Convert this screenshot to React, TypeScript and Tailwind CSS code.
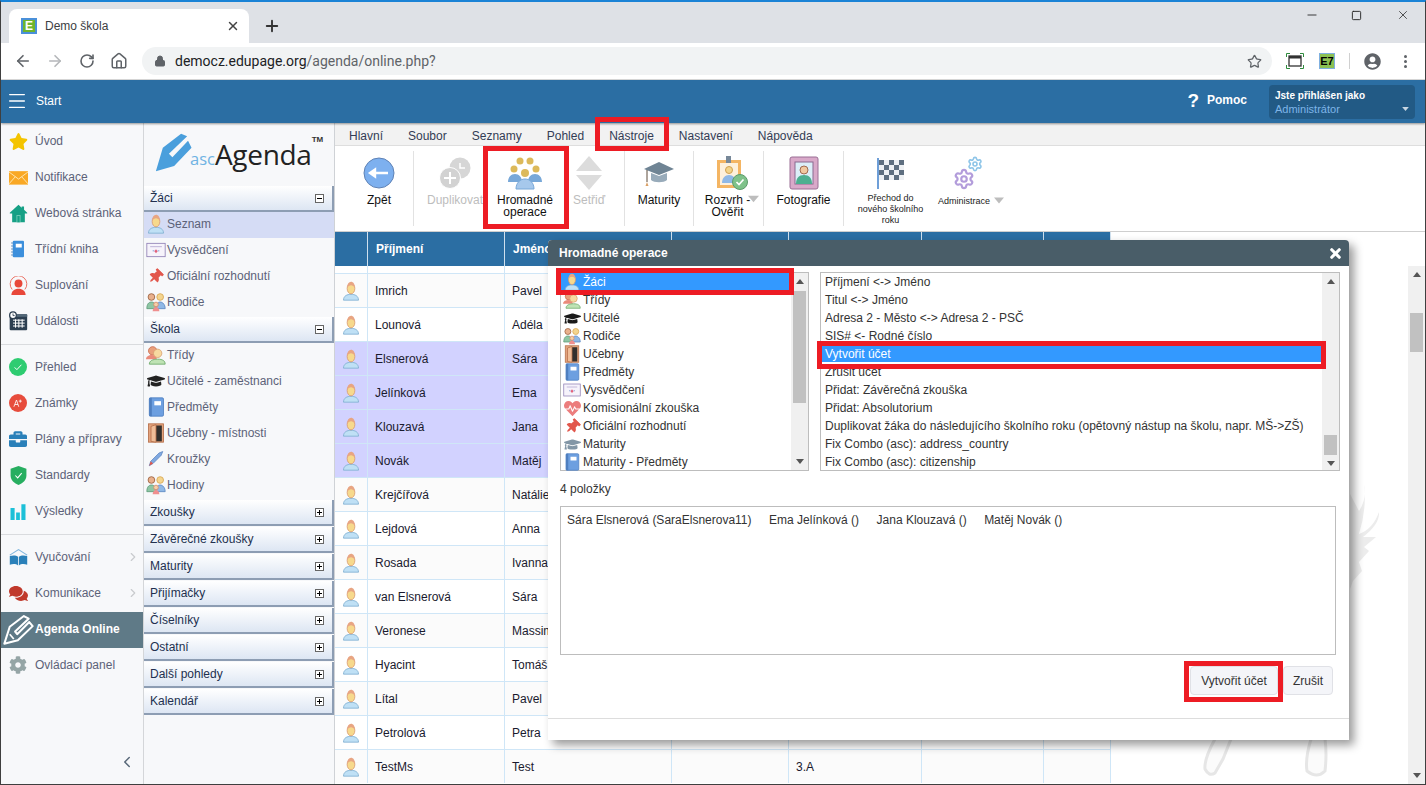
import { ArrowLeft, ArrowRight, ChevronLeft, House, Lock, Menu, Minus, Plus, RotateCw, Settings, Square, Star, X } from "lucide-react";
import { FaBriefcase, FaCog, FaComments, FaGraduationCap, FaHeartbeat, FaStar, FaThumbtack, FaUserCircle } from "react-icons/fa";
import type { ReactNode } from "react";

type IconProps = { className?: string };

const StudentIcon = ({ className = "w-[20px] h-[20px]" }: IconProps) => (
  <svg viewBox="0 0 24 24" className={className}>
    <path d="M3 23c0-5 4-7 9-7s9 2 9 7z" fill="#bfe0f5" stroke="#7eaed0" />
    <ellipse cx="12" cy="9" rx="4.6" ry="6.4" fill="#f7d98c" stroke="#d99a70" />
    <path d="M7.4 8c0-4.500 2-7 4.600-7s4.600 2.500 4.600 7c-1-2-3-3-4.600-3s-3.600 1-4.600 3z" fill="#e8a583" />
  </svg>
);

const ClassIcon = ({ className = "w-[20px] h-[20px]" }: IconProps) => (
  <svg viewBox="0 0 24 24" className={className}>
    <circle cx="8" cy="7" r="5" fill="#e9a07c" stroke="#c9694c" />
    <path d="M0 17c0-3 3-5 7-5s6 2 6 5z" fill="#ea8a7a" />
    <circle cx="14" cy="10" r="5" fill="#f7d9a0" stroke="#d8a070" />
    <path d="M4 23c0-4 4-6 10-6s9 2 9 6z" fill="#bfe3b4" stroke="#6aa766" />
  </svg>
);

const ParentsIcon = ({ className = "w-[20px] h-[20px]" }: IconProps) => (
  <svg viewBox="0 0 24 24" className={className}>
    <circle cx="6.500" cy="6" r="4" fill="#e9b08c" stroke="#9a5f3c" />
    <path d="M1 20c0-5 2-8 5.500-8s5.500 3 5.500 8z" fill="#8ec6a4" stroke="#5d9a78" />
    <circle cx="17" cy="6" r="4" fill="#f4d58f" stroke="#d9a64f" />
    <path d="M12 20c0-5 2-8 5-8s6 3 6 8z" fill="#8fb8e6" stroke="#5d88c0" />
    <circle cx="12" cy="15" r="2.800" fill="#f5cfa8" stroke="#d58a6a" />
    <path d="M8 23c0-3 2-5 4-5s4 2 4 5z" fill="#ef8f8f" />
  </svg>
);

const BookIcon = ({ className = "w-[20px] h-[20px]" }: IconProps) => (
  <svg viewBox="0 0 24 24" className={className}>
    <rect x="4" y="1" width="17" height="22" rx="1.500" fill="#6d9fe0" stroke="#4f7fc0" />
    <rect x="4" y="1" width="3" height="22" fill="#4f7fc0" />
    <rect x="10" y="5" width="8" height="5" fill="#ffffff" />
  </svg>
);

const DoorIcon = ({ className = "w-[20px] h-[20px]" }: IconProps) => (
  <svg viewBox="0 0 24 24" className={className}>
    <rect x="3" y="1" width="18" height="22" fill="#e3a37d" stroke="#b56e48" />
    <rect x="12" y="3" width="7" height="19" fill="#33302e" />
    <path d="M12 2l-6 2v18l6 1z" fill="#f0bd98" stroke="#b56e48" />
  </svg>
);

const CertificateIcon = ({ className = "w-[20px] h-[20px]" }: IconProps) => (
  <svg viewBox="0 0 24 24" className={className}>
    <rect x="1" y="4" width="22" height="16" fill="#f6f3fb" stroke="#8f7fb5" />
    <path d="M5 8h14" stroke="#b3a5d0" />
    <path d="M12 11l2 2.500-2 2.500-2-2.500z" fill="#e2607a" />
    <path d="M8 13h2M14 13h2" stroke="#6f8fd0" />
  </svg>
);

const CalendarIcon = () => (
  <svg viewBox="0 0 24 24" className="w-[20px] h-[20px]">
    <rect x="2" y="4" width="21" height="19" rx="1" fill="#2c3e50" />
    <rect x="2" y="4" width="21" height="3" fill="#536878" />
    <circle cx="6" cy="5" r="4" fill="#fff" stroke="#2c3e50" strokeWidth="1.500" />
    <path d="M6 3v2.500h2" stroke="#2c3e50" fill="none" />
    <path d="M6 11h14M6 14.500h14M6 18h14M9 10v10M13 10v10M17 10v10" stroke="#fff" strokeWidth="1.200" />
  </svg>
);

const MailIcon = () => (
  <svg viewBox="0 0 24 24" className="w-[19px] h-[19px]">
    <rect x="0" y="4" width="24" height="17" fill="#f9a825" />
    <path d="M0 5l12 9 12-9M0 20l8-9M24 20l-8-9" stroke="#fff3d0" fill="none" />
  </svg>
);

const HouseIcon = () => (
  <svg viewBox="0 0 24 24" className="w-[19px] h-[19px]">
    <path d="M12 1L1 11v1h3v11h16V12h3v-1l-4-3.600V3h-3v1.700z" fill="#16a085" />
    <rect x="9.500" y="14" width="5" height="9" fill="#7fd0bd" />
    <rect x="10.500" y="15" width="3" height="8" fill="#16a085" />
  </svg>
);

const NotebookIcon = () => (
  <svg viewBox="0 0 24 24" className="w-[18px] h-[18px]">
    <rect x="5" y="1" width="15" height="22" rx="1.500" fill="#3c8fdc" />
    <rect x="9" y="5" width="8" height="5" fill="#fff" />
    <path d="M5 4h-2M5 8h-2M5 12h-2M5 16h-2M5 20h-2" stroke="#2a6aa8" strokeWidth="1.200" />
  </svg>
);

const SubstIcon = () => (
  <svg viewBox="0 0 24 24" className="w-[19px] h-[19px]">
    <path d="M4 17A10.500 10.500 0 1 1 20 17" fill="none" stroke="#ea6a5c" strokeWidth="1.200" />
    <circle cx="12" cy="9.500" r="5" fill="#e8483a" />
    <path d="M3 24c0-5 4-8 9-8s9 3 9 8z" fill="#e8483a" />
  </svg>
);

const CheckDot = () => (
  <svg viewBox="0 0 24 24" className="w-[18px] h-[18px]">
    <circle cx="12" cy="12" r="12" fill="#2ecc71" />
    <path d="M7.500 12.500l3 3 6-6.500" stroke="#fff" strokeWidth="1.300" fill="none" />
  </svg>
);

const GradeDot = () => (
  <svg viewBox="0 0 24 24" className="w-[18px] h-[18px]">
    <circle cx="12" cy="12" r="12" fill="#e74c3c" />
    <path d="M6.500 17l3.500-9 3 9M8 14h4M15 7.500v4M13 9.500h4" stroke="#fff" strokeWidth="1.100" fill="none" />
  </svg>
);

const ShieldIcon = () => (
  <svg viewBox="0 0 24 24" className="w-[19px] h-[19px]">
    <path d="M12 0l10 3.500v8.500c0 6-5 10-10 12-5-2-10-6-10-12V3.500z" fill="#27ae60" />
    <path d="M8 12l3 3 5-6" stroke="#fff" strokeWidth="1.300" fill="none" />
  </svg>
);

const BarsIcon = () => (
  <svg viewBox="0 0 24 24" className="w-[18px] h-[18px]">
    <rect x="2" y="8" width="5.500" height="16" fill="#1cc0d8" />
    <rect x="9.500" y="14" width="5" height="10" fill="#1cc0d8" />
    <rect x="16.500" y="3" width="5.500" height="21" fill="#1cc0d8" />
  </svg>
);

const OpenBookIcon = () => (
  <svg viewBox="0 0 24 24" className="w-[19px] h-[19px]">
    <path d="M1 9l11-7 11 7" fill="none" stroke="#7fb5dd" strokeWidth="1.400" />
    <path d="M1 10c4-1 8-1 10.500 1v11C9 20 5 20 1 21z" fill="#2a80b9" />
    <path d="M23 10c-4-1-8-1-10.500 1v11c2.500-2 6.500-2 10.500-1z" fill="#2a80b9" />
  </svg>
);

const PenIcon = ({ className, fill }: { className: string; fill: string }) => (
  <svg viewBox="0 0 46 46" className={className}>
    <path d="M1 45l8-27L30 2l7 3-21 20 4 4L38 10l4 8-20 21z" fill={fill} />
  </svg>
);

const PenOutline = () => (
  <svg viewBox="0 0 46 46" className="w-[31px] h-[31px]">
    <path d="M2 44l8-25L31 3l7 4-20 19 3 4L39 12l5 6-22 21z" fill="none" stroke="#fff" strokeWidth="3" strokeLinejoin="round" />
    <path d="M10 30l6 7" stroke="#fff" strokeWidth="2.500" />
  </svg>
);

const SortIcon = () => (
  <svg viewBox="0 0 30 34" className="w-[30px] h-[34px]">
    <path d="M15 0l13 15H2z" fill="#dcdcdc" />
    <path d="M15 34L2 19h26z" fill="#dcdcdc" />
  </svg>
);

const DuplicateIcon = () => (
  <svg viewBox="0 0 32 32" className="w-[32px] h-[32px]">
    <circle cx="21" cy="11" r="10.500" fill="#d6d6d6" />
    <path d="M21 6v5h5" stroke="#fff" strokeWidth="1.500" fill="none" />
    <circle cx="11" cy="21" r="10.500" fill="#d2d2d2" stroke="#fff" />
    <path d="M11 15v12M5 21h12" stroke="#fff" strokeWidth="2" />
  </svg>
);

const BackIcon = () => (
  <svg viewBox="0 0 32 32" className="w-[32px] h-[32px]">
    <circle cx="16" cy="16" r="15" fill="#7db0ef" stroke="#5f82b5" />
    <path d="M7 16h18M7 16l5-3.500v7z" stroke="#fff" strokeWidth="2.400" fill="#fff" />
  </svg>
);

const GroupIcon = () => (
  <svg viewBox="0 0 34 34" className="w-[34px] h-[34px]">
    <circle cx="12" cy="5" r="3.500" fill="#dcb95a" />
    <circle cx="22" cy="5" r="3.500" fill="#dcb95a" />
    <circle cx="6" cy="13" r="3.500" fill="#dcb95a" />
    <circle cx="28" cy="13" r="3.500" fill="#dcb95a" />
    <circle cx="17" cy="17" r="4" fill="#dcb95a" />
    <path d="M0 26c0-5 3-8 7-8s7 3 7 8zM20 26c0-5 3-8 7-8s7 3 7 8z" fill="#78a8d8" />
    <path d="M8 33c0-6 4-10 9-10s9 4 9 10z" fill="#a6c8ec" stroke="#78a8d8" />
  </svg>
);

const CapIcon = () => (
  <svg viewBox="0 0 32 32" className="w-[32px] h-[32px]">
    <path d="M16 5L1 12l15 6 15-6z" fill="#6f8494" />
    <path d="M8 16v7c3 3 13 3 16 0v-7l-8 3z" fill="#98abba" />
    <path d="M4 13v12" stroke="#5c4a3a" />
    <path d="M4 25l-1.500 4h3z" fill="#d9a066" />
  </svg>
);

const ClipboardIcon = () => (
  <svg viewBox="0 0 32 34" className="w-[32px] h-[34px]">
    <rect x="1" y="4" width="24" height="28" fill="#f4b563" />
    <rect x="4" y="7" width="18" height="22" fill="#fdf0dc" />
    <rect x="10" y="0" width="5" height="7" fill="#778899" />
    <circle cx="13" cy="14" r="3.500" fill="#f3d48a" stroke="#d0a050" />
    <path d="M6 27c0-5 3-8 7-8s7 3 7 8z" fill="#8fb8e6" />
    <circle cx="24" cy="26" r="7.500" fill="#7fc28a" stroke="#5c9b6a" />
    <path d="M20.500 26l2.500 2.500 4.500-5" stroke="#fff" strokeWidth="1.700" fill="none" />
  </svg>
);

const PhotoIcon = () => (
  <svg viewBox="0 0 32 34" className="w-[32px] h-[34px]">
    <rect x="2" y="1" width="28" height="32" rx="2" fill="#d9a9c9" stroke="#9a6f95" />
    <rect x="7" y="6" width="18" height="22" fill="#dceef8" stroke="#8a6a90" />
    <circle cx="16" cy="14" r="4" fill="#f0c8a0" stroke="#a06a50" />
    <path d="M8 28c0-6 3-9 8-9s8 3 8 9z" fill="#4caf90" />
  </svg>
);

const FlagIcon = () => {
  const cells = [0, 1, 2, 3].flatMap(r => [0, 1, 2, 3, 4].filter(c => (r + c) % 2 === 0).map(c => [c, r]));
  return (
    <svg viewBox="0 0 30 32" className="w-[30px] h-[32px]">
      <rect x="1" y="1" width="2" height="31" fill="#6f9fd8" />
      <rect x="3" y="3" width="25" height="20" fill="#eef1f4" />
      {cells.map(([c, r]) => (
        <rect key={`${c}-${r}`} x={3 + c * 5} y={3 + r * 5} width="5" height="5" fill="#5f6f80" />
      ))}
    </svg>
  );
};

const AdminIcon = () => (
  <span className="relative block w-[30px] h-[34px] ml-[8px]">
    <Settings className="absolute left-0 bottom-0 w-[22px] h-[22px] text-[#b39ddb]" strokeWidth={2.400} />
    <Settings className="absolute right-0 top-0 w-[16px] h-[16px] text-[#8ec5e8]" strokeWidth={2.400} />
  </span>
);

const FullscreenIcon = () => (
  <svg viewBox="0 0 18 16" className="ml-[14px] w-[18px] h-[16px] shrink-0">
    <rect x="3" y="3" width="12" height="10" fill="none" stroke="#333" strokeWidth="1.300" />
    <rect x="3" y="3" width="12" height="2.500" fill="#333" />
    <path d="M0.500 4V0.500H4M14 0.500h3.500V4M0.500 12v3.500H4M14 15.500h3.500V12" fill="none" stroke="#2e8b3d" />
  </svg>
);

const Triangle = ({ dir, className }: { dir: "up" | "down"; className: string }) => (
  <svg viewBox="0 0 10 6" className={className}>
    <path d={dir === "up" ? "M5 0l5 6H0z" : "M5 6L0 0h10z"} fill="currentColor" />
  </svg>
);

const mainMenu: { icon: ReactNode; label: string; chevron?: boolean; active?: boolean; divider?: boolean }[] = [
  { icon: <FaStar className="w-[19px] h-[19px] text-[#f4c400]" />, label: "Úvod" },
  { icon: <MailIcon />, label: "Notifikace" },
  { icon: <HouseIcon />, label: "Webová stránka" },
  { icon: <NotebookIcon />, label: "Třídní kniha" },
  { icon: <SubstIcon />, label: "Suplování" },
  { icon: <CalendarIcon />, label: "Události", divider: true },
  { icon: <CheckDot />, label: "Přehled" },
  { icon: <GradeDot />, label: "Známky" },
  { icon: <FaBriefcase className="w-[18px] h-[18px] text-[#2a80b9]" />, label: "Plány a přípravy" },
  { icon: <ShieldIcon />, label: "Standardy" },
  { icon: <BarsIcon />, label: "Výsledky", divider: true },
  { icon: <OpenBookIcon />, label: "Vyučování", chevron: true },
  { icon: <FaComments className="w-[19px] h-[19px] text-[#c0392b]" />, label: "Komunikace", chevron: true },
  { icon: <PenOutline />, label: "Agenda Online", active: true },
  { icon: <FaCog className="w-[18px] h-[18px] text-[#95a5a6]" />, label: "Ovládací panel" },
];

const students = [
  ["Imrich", "Pavel"],
  ["Lounová", "Adéla"],
  ["Elsnerová", "Sára", "sel"],
  ["Jelínková", "Ema", "sel"],
  ["Klouzavá", "Jana", "sel"],
  ["Novák", "Matěj", "sel"],
  ["Krejčířová", "Natálie"],
  ["Lejdová", "Anna"],
  ["Rosada", "Ivanna"],
  ["van Elsnerová", "Sára"],
  ["Veronese", "Massimo"],
  ["Hyacint", "Tomáš"],
  ["Lítal", "Pavel"],
  ["Petrolová", "Petra"],
  ["TestMs", "Test"],
];

const leftList: { icon: ReactNode; label: string }[] = [
  { icon: <StudentIcon className="w-[18px] h-[18px]" />, label: "Žáci" },
  { icon: <ClassIcon className="w-[18px] h-[18px]" />, label: "Třídy" },
  { icon: <FaGraduationCap className="w-[17px] h-[17px] text-[#1a1a1a]" />, label: "Učitelé" },
  { icon: <ParentsIcon className="w-[18px] h-[18px]" />, label: "Rodiče" },
  { icon: <DoorIcon className="w-[18px] h-[18px]" />, label: "Učebny" },
  { icon: <BookIcon className="w-[18px] h-[18px]" />, label: "Předměty" },
  { icon: <CertificateIcon className="w-[18px] h-[18px]" />, label: "Vysvědčení" },
  { icon: <FaHeartbeat className="w-[17px] h-[17px] text-[#ec7d7d]" />, label: "Komisionální zkouška" },
  { icon: <FaThumbtack className="w-[15px] h-[15px] text-[#e2574c] rotate-45" />, label: "Oficiální rozhodnutí" },
  { icon: <FaGraduationCap className="w-[17px] h-[17px] text-[#8296a6]" />, label: "Maturity" },
  { icon: <BookIcon className="w-[18px] h-[18px]" />, label: "Maturity - Předměty" },
];

const rightList = [
  "Příjmení <-> Jméno",
  "Titul <-> Jméno",
  "Adresa 2 - Město <-> Adresa 2 - PSČ",
  "SIS# <- Rodné číslo",
  "Vytvořit účet",
  "Zrušit účet",
  "Přidat: Závěrečná zkouška",
  "Přidat: Absolutorium",
  "Duplikovat žáka do následujícího školního roku (opětovný nástup na školu, napr. MŠ->ZŠ)",
  "Fix Combo (asc): address_country",
  "Fix Combo (asc): citizenship",
];

const SectionHeader = ({ label, open }: { label: string; open?: boolean }) => (
  <div className="mt-px h-[26px] shrink-0 flex items-center justify-between pl-[6px] pr-[8px] bg-gradient-to-b from-white to-[#dde6f3] border-b-2 border-r-2 border-[#8d9db3] text-[12px] text-[#22304f]">
    <span>{label}</span>
    <span className="relative w-[9px] h-[9px] border border-[#666] bg-white flex items-center justify-center">
      <span className="w-[5px] h-px bg-black" />
      {!open && <span className="absolute w-px h-[5px] bg-black" />}
    </span>
  </div>
);

const SectionItem = ({ icon, label, selected }: { icon: ReactNode; label: string; selected?: boolean }) => (
  <div className={`h-[26px] pb-[2px] flex items-center text-[12px] text-[#5c6278] ${selected ? "bg-[#d5dcf5]" : ""}`}>
    <span className="w-[23px] flex justify-center shrink-0">{icon}</span>
    <span>{label}</span>
  </div>
);

const ToolItem = ({ width, icon, label, disabled, small }: { width: string; icon: ReactNode; label: ReactNode; disabled?: boolean; small?: boolean }) => (
  <div className={`${width} shrink-0 flex flex-col items-center pt-[10px] text-center`}>
    <span className="h-[34px] flex items-center justify-center">{icon}</span>
    <div className={`whitespace-nowrap ${small ? "mt-[3px] text-[9px] leading-[11px] text-[#222]" : "mt-[2px] text-[12px] leading-[12px] pt-[2px]"} ${disabled ? "text-[#bdbdbd]" : "text-[#111]"}`}>
      {label}
    </div>
  </div>
);

const Sep = () => <span className="w-px h-[75px] mt-[5px] bg-[#e2e2e2] shrink-0" />;

const ScrollTrack = ({ thumb, spacer }: { thumb: string; spacer: string }) => (
  <div className="w-[17px] shrink-0 bg-[#f0f0f0] flex flex-col items-center h-full">
    <div className="h-[17px] flex items-center justify-center shrink-0"><Triangle dir="up" className="w-[8px] h-[5px] text-[#555]" /></div>
    <div className={`${spacer} shrink-0`} />
    <div className={`${thumb} w-[13px] bg-[#c1c1c1] shrink-0`} />
    <div className="mt-auto h-[17px] flex items-center justify-center shrink-0"><Triangle dir="down" className="w-[8px] h-[5px] text-[#555]" /></div>
  </div>
);

const colCls = ["w-[33px] flex justify-center", "w-[137px] pl-[7px]", "w-[167px] pl-[7px]", "w-[117px]", "w-[133px] pl-[7px]", "w-[122px]", "w-[67px]"];
const headCols = ["", "Příjmení", "Jméno", "", "", "", ""];

export default function App() {
  return (
    <div className="relative w-[1426px] h-[785px] overflow-hidden flex flex-col border-t-2 border-t-[#1a83d6] border-x border-b border-x-[#3f3f3f] border-b-[#3f3f3f] bg-white [font-family:'Liberation_Sans',Arial,sans-serif]">
      {/* browser tabs */}
      <div className="h-[41px] shrink-0 bg-[#dee1e6] flex items-start">
        <div className="ml-[8px] mt-[7px] h-[34px] w-[240px] bg-white rounded-t-lg flex items-center pl-[12px] pr-[9px]">
          <span className="w-[16px] h-[16px] border-2 border-[#4a90d9] bg-[#6fb52c] text-white text-[12px] font-bold leading-[12px] flex items-center justify-center">E</span>
          <span className="ml-[8px] text-[12px] text-[#3c4043]">Demo škola</span>
          <X className="ml-auto w-[14px] h-[14px] text-[#444]" strokeWidth={2.500} />
        </div>
        <Plus className="ml-[14px] mt-[15px] w-[18px] h-[18px] text-[#333]" strokeWidth={2.500} />
        <div className="ml-auto flex items-center mt-[6px] pr-[15px] gap-[32px] text-[#222]">
          <Minus className="w-[14px] h-[14px]" strokeWidth={1.500} />
          <Square className="w-[11px] h-[11px] mr-[2px]" strokeWidth={2} />
          <X className="w-[14px] h-[14px]" strokeWidth={1.300} />
        </div>
      </div>

      {/* address bar */}
      <div className="h-[37px] shrink-0 bg-white border-b border-[#dcdcdc] flex items-center pl-[13px] text-[#5f6368]">
        <ArrowLeft className="w-[18px] h-[18px]" strokeWidth={2.200} />
        <ArrowRight className="ml-[14px] w-[18px] h-[18px] text-[#b5b7ba]" strokeWidth={2.200} />
        <RotateCw className="ml-[15px] w-[16px] h-[16px]" strokeWidth={2.400} />
        <House className="ml-[15px] w-[18px] h-[18px]" strokeWidth={2} />
        <div className="ml-[14px] w-[1130px] h-[28px] rounded-full bg-[#f1f3f4] flex items-center pl-[12px] pr-[10px]">
          <Lock className="w-[12px] h-[12px] fill-[#5f6368]" />
          <span className="ml-[9px] text-[14px] text-[#5f6368] [font-family:Roboto,sans-serif]"><span className="text-[#202124]">democz.edupage.org</span>/agenda/online.php?</span>
          <Star className="ml-auto w-[15px] h-[15px]" strokeWidth={2} />
        </div>
        <FullscreenIcon />
        <span className="ml-[15px] w-[16px] h-[16px] border border-[#7fb0e0] bg-[#8cc152] text-[11px] font-bold leading-[14px] text-black text-center shrink-0">E7</span>
        <span className="ml-[14px] w-px h-[16px] bg-[#d0d0d0] shrink-0" />
        <FaUserCircle className="ml-[14px] w-[17px] h-[17px] shrink-0" />
        <span className="ml-[23px] flex flex-col gap-[2px] shrink-0">
          <span className="w-[3px] h-[3px] rounded-full bg-[#5f6368]" />
          <span className="w-[3px] h-[3px] rounded-full bg-[#5f6368]" />
          <span className="w-[3px] h-[3px] rounded-full bg-[#5f6368]" />
        </span>
      </div>

      {/* app header */}
      <div className="h-[43px] shrink-0 bg-[#2b6ea3] flex items-center text-white z-10 shadow-[0_1px_2px_rgba(0,0,0,0.4)]">
        <Menu className="ml-[5px] -mt-[2px] w-[22px] h-[22px]" strokeWidth={1.500} />
        <span className="ml-[8px] -mt-[2px] text-[12px]">Start</span>
        <span className="ml-auto -mt-[3px] text-[19px] font-bold leading-none">?</span>
        <span className="ml-[8px] -mt-[3px] text-[12px] font-bold">Pomoc</span>
        <div className="ml-[22px] mr-[10px] w-[146px] h-[34px] rounded-sm bg-[#225a85] px-[6px] pt-[2px] flex flex-col justify-center">
          <span className="text-[10px] font-bold leading-[13px]">Jste přihlášen jako</span>
          <span className="flex items-center justify-between text-[11px] leading-[14px] text-[#7fb5e8]">
            Administrátor
            <Triangle dir="down" className="w-[7px] h-[4px] text-[#c8d6e2]" />
          </span>
        </div>
      </div>

      <div className="flex flex-1 min-h-0">
        {/* main menu */}
        <div className="w-[143px] shrink-0 bg-[#f7f8fa] border-r border-[#d4d6d9] flex flex-col">
          {mainMenu.map(item => (
            <div key={item.label} className="shrink-0">
              <div className={`h-[36px] flex items-center text-[12px] ${item.active ? "bg-[#5f7a87] text-white font-bold mt-px -mb-px pb-[2px]" : "text-[#5c6278]"}`}>
                <span className="w-[34px] shrink-0 flex justify-center">{item.icon}</span>
                <span>{item.label}</span>
                {item.chevron && <ChevronLeft className="ml-auto mr-[3px] w-[14px] h-[14px] rotate-180 text-[#c9cbce]" />}
              </div>
              {item.divider && <div className="h-[10px] flex items-center"><span className="w-full h-px bg-[#d9dbde]" /></div>}
            </div>
          ))}
          <div className="mt-auto h-[40px] flex justify-end items-start pr-[7px] pt-[9px]">
            <ChevronLeft className="w-[18px] h-[18px] text-[#5a6a7a]" strokeWidth={2} />
          </div>
        </div>

        {/* agenda tree */}
        <div className="w-[191px] shrink-0 bg-[#f7f8fa] border-r border-[#cfd2d6] flex flex-col">
          <div className="h-[62px] shrink-0 flex items-start pl-[11px] pt-[9px]">
            <PenIcon className="w-[40px] h-[40px] shrink-0" fill="#4a9fdc" />
            <div className="-ml-[5px] mt-[12px] flex items-baseline">
              <span className="text-[16.500px] leading-[20px] text-[#6fb3e3] [font-family:'Open_Sans',sans-serif]">asc</span>
              <span className="text-[28px] leading-[20px] tracking-[-0.3px] text-[#222] [font-family:'Open_Sans',sans-serif]">Agenda</span>
            </div>
            <span className="ml-0 mt-[3px] text-[8px] font-bold leading-[10px] text-[#333]">TM</span>
          </div>
          <SectionHeader label="Žáci" open />
          <SectionItem icon={<StudentIcon />} label="Seznam" selected />
          <SectionItem icon={<CertificateIcon />} label="Vysvědčení" />
          <SectionItem icon={<FaThumbtack className="w-[15px] h-[15px] text-[#e2574c] rotate-45" />} label="Oficiální rozhodnutí" />
          <SectionItem icon={<ParentsIcon />} label="Rodiče" />
          <SectionHeader label="Škola" open />
          <SectionItem icon={<ClassIcon />} label="Třídy" />
          <SectionItem icon={<FaGraduationCap className="w-[18px] h-[18px] text-[#222]" />} label="Učitelé - zaměstnanci" />
          <SectionItem icon={<BookIcon />} label="Předměty" />
          <SectionItem icon={<DoorIcon />} label="Učebny - místnosti" />
          <SectionItem icon={<svg viewBox="0 0 24 24" className="w-[18px] h-[18px]"><path d="M3 21l5-3 11-11 2-5-5 2L5 15z" fill="#7fa8e0" stroke="#5d86c0" /><path d="M3 21l2-6 3 3z" fill="#e2574c" /></svg>} label="Kroužky" />
          <SectionItem icon={<ParentsIcon />} label="Hodiny" />
          {["Zkoušky", "Závěrečné zkoušky", "Maturity", "Přijímačky", "Číselníky", "Ostatní", "Další pohledy", "Kalendář"].map(s => (
            <SectionHeader key={s} label={s} />
          ))}
        </div>

        {/* content */}
        <div className="flex-1 min-w-0 flex flex-col">
          <div className="h-[23px] shrink-0 pt-[3px] bg-[#f2f2f2] border-b border-[#dedede] flex items-center pl-[14px] gap-[25px] text-[12px] text-[#333c55]">
            {["Hlavní", "Soubor", "Seznamy", "Pohled", "Nástroje", "Nastavení", "Nápověda"].map(m => (
              <span key={m}>{m}</span>
            ))}
          </div>
          <div className="h-[86px] shrink-0 bg-white border-b border-[#cfcfcf] flex items-start pl-[10px]">
            <ToolItem width="w-[68px]" icon={<BackIcon />} label="Zpět" />
            <Sep />
            <ToolItem width="w-[82px]" icon={<DuplicateIcon />} label="Duplikovat" disabled />
            <ToolItem width="w-[58px]" icon={<GroupIcon />} label={<>Hromadné<br />operace</>} />
            <ToolItem width="w-[70px]" icon={<SortIcon />} label="Setřiď" disabled />
            <Sep />
            <ToolItem width="w-[68px]" icon={<CapIcon />} label="Maturity" />
            <Sep />
            <ToolItem width="w-[69px]" icon={<div className="ml-[6px]"><ClipboardIcon /></div>} label={<span className="relative block -ml-[2px]">Rozvrh -<br />Ověřit<Triangle dir="down" className="absolute -right-[9px] top-[1px] w-[11px] h-[8px] text-[#bdbdbd]" /></span>} />
            <Sep />
            <ToolItem width="w-[79px]" icon={<PhotoIcon />} label="Fotografie" />
            <Sep />
            <ToolItem width="w-[93px]" icon={<FlagIcon />} label={<>Přechod do<br />nového školního<br />roku</>} small />
            <ToolItem width="w-[54px]" icon={<AdminIcon />} label={<span className="relative block mt-[3px]">Administrace<Triangle dir="down" className="absolute -right-[14px] top-0 w-[10px] h-[9px] text-[#bdbdbd]" /></span>} small />
          </div>

          <div className="flex-1 min-h-0 flex">
            <div className="w-[776px] shrink-0 overflow-hidden">
              <div className="h-[34px] bg-[#2b6ea3] flex items-center text-[12px] font-bold text-white">
                {headCols.map((h, i) => (
                  <div key={i} className={`${colCls[i]} h-full flex items-center border-r border-[#cfe0ee]`}><span className="ml-px">{h}</span></div>
                ))}
              </div>
              <div className="h-[7px] flex">
                {colCls.map((c, i) => (
                  <div key={i} className={`${c} h-full border-r border-[#cfe6f7]`} />
                ))}
              </div>
              {students.map(([surname, name, sel], idx) => {
                const cells = ["", surname, name, "", idx === 14 ? "3.A" : "", "", ""];
                return (
                  <div key={surname + name} className={`h-[34px] flex items-center text-[12px] text-[#1a1a2e] border-t border-[#cfe6f7] ${sel ? "bg-[#d2d2ff]" : idx % 2 === 0 ? "bg-[#fbfbfb]" : "bg-white"}`}>
                    {cells.map((c, i) => (
                      <div key={i} className={`${colCls[i]} h-full flex items-center border-r border-[#cfe6f7] whitespace-nowrap overflow-hidden`}>
                        {i === 0 ? <StudentIcon /> : c}
                      </div>
                    ))}
                  </div>
                );
              })}
            </div>
            <div className="relative flex-1 min-w-0 flex justify-end pt-[34px]">
              <svg viewBox="1110 233 297 552" className="absolute left-0 top-0 w-[297px] h-[552px]">
                <path d="M1349 495L1358 512Q1366 500 1363 485Q1366 510 1358 535Q1372 530 1378 513Q1379 525 1362 538L1375 538L1363 548L1368 552L1358 563L1361 572L1352 582L1349 590Z" fill="#ececec" />
                <path d="M1214 740Q1203 760 1204 770Q1208 778 1214 774L1222 760L1230 740M1310 740Q1304 760 1306 772Q1316 780 1324 772Q1326 755 1324 740" fill="#fbfbfb" stroke="#e6e6e6" strokeWidth="3" />
              </svg>
              <div className="relative w-[17px] shrink-0">
                <ScrollTrack spacer="mt-[30px]" thumb="h-[39px]" />
              </div>
            </div>
          </div>
        </div>
      </div>

      {/* dialog */}
      <div className="absolute left-[547px] top-[238px] w-[801px] h-[500px] bg-white shadow-[5px_5px_10px_rgba(0,0,0,0.4)] rounded-t-sm z-20 flex flex-col text-[12px] text-[#333]">
        <div className="h-[26px] shrink-0 bg-[#495d68] rounded-t-sm flex items-center justify-between pl-[11px] pr-[6px] text-white font-bold">
          <span>Hromadné operace</span>
          <X className="w-[15px] h-[15px]" strokeWidth={5} />
        </div>
        <div className="pl-[12px] pt-[6px] flex gap-[11px]">
          <div className="w-[249px] h-[199px] border border-[#bdbdbd] flex">
            <div className="flex-1 min-w-0">
              {leftList.map((it, i) => (
                <div key={it.label} className={`h-[18px] flex items-center ${i === 0 ? "bg-[#3399ff] text-white" : ""}`}>
                  <span className="w-[22px] flex justify-center shrink-0">{it.icon}</span>
                  {it.label}
                </div>
              ))}
            </div>
            <ScrollTrack spacer="mt-[1px]" thumb="h-[112px]" />
          </div>
          <div className="w-[520px] h-[199px] border border-[#bdbdbd] flex">
            <div className="flex-1 min-w-0">
              {rightList.map((t, i) => (
                <div key={t} className={`h-[18px] leading-[18px] pl-[4px] whitespace-nowrap ${i === 4 ? "bg-[#3399ff] text-white border-b border-white" : ""}`}>{t}</div>
              ))}
            </div>
            <ScrollTrack spacer="mt-[145px]" thumb="h-[20px]" />
          </div>
        </div>
        <div className="ml-[12px] mt-[9px] h-[18px] leading-[18px]">4 položky</div>
        <div className="ml-[12px] mt-[8px] w-[776px] h-[149px] border border-[#bdbdbd] pl-[6px] pt-[4px] flex gap-[17.5px] items-start">
          <span>Sára Elsnerová (SaraElsnerova11)</span>
          <span>Ema Jelínková ()</span>
          <span>Jana Klouzavá ()</span>
          <span>Matěj Novák ()</span>
        </div>
        <div className="mt-[11px] pr-[16px] flex justify-end gap-[5px]">
          <button className="w-[88px] h-[29px] bg-[#f4f5f9] border border-[#e0e1e6] rounded-sm">Vytvořit účet</button>
          <button className="w-[50px] h-[29px] bg-[#f4f5f9] border border-[#e0e1e6] rounded-sm">Zrušit</button>
        </div>
        <div className="mt-[23px] border-t border-[#dddddd]" />
      </div>

      {/* annotation frames */}
      <div className="absolute z-30 left-[594px] top-[115px] w-[74px] h-[34px] border-[5px] border-[#ed1c24] bg-transparent" />
      <div className="absolute z-30 left-[482px] top-[144px] w-[86px] h-[83px] border-[5px] border-[#ed1c24]" />
      <div className="absolute z-30 left-[555px] top-[266px] w-[238px] h-[27px] border-[5px] border-[#ed1c24]" />
      <div className="absolute z-30 left-[816px] top-[339px] w-[509px] h-[28px] border-[5px] border-[#ed1c24]" />
      <div className="absolute z-30 left-[1183px] top-[659px] w-[99px] h-[41px] border-[5px] border-[#ed1c24]" />
    </div>
  );
}
